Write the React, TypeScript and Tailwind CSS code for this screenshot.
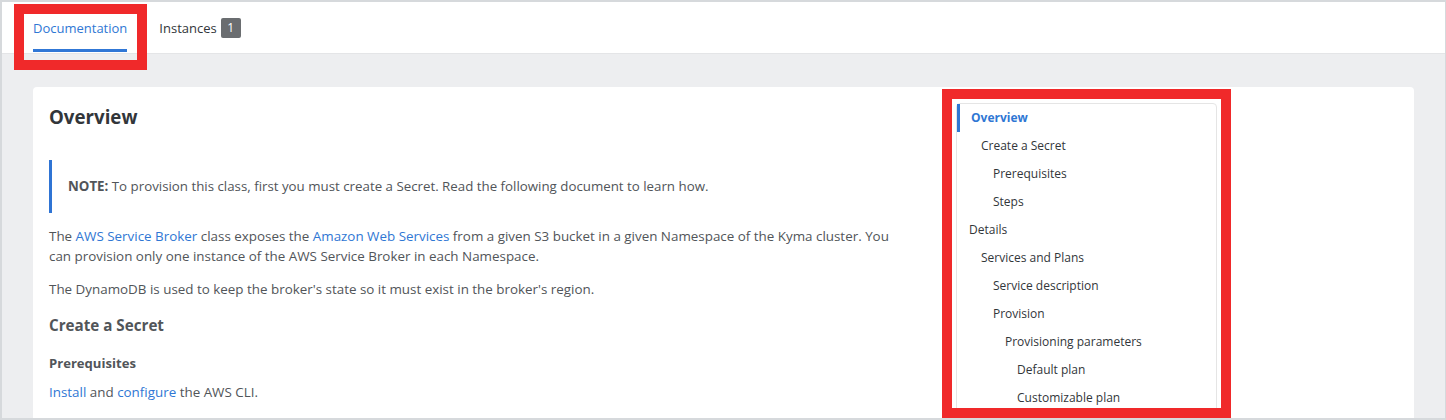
const TOC = [
  { label: 'Overview', pl: 'pl-[11px]', active: true },
  { label: 'Create a Secret', pl: 'pl-[24px]' },
  { label: 'Prerequisites', pl: 'pl-[36px]' },
  { label: 'Steps', pl: 'pl-[36px]' },
  { label: 'Details', pl: 'pl-[12px]' },
  { label: 'Services and Plans', pl: 'pl-[24px]' },
  { label: 'Service description', pl: 'pl-[36px]' },
  { label: 'Provision', pl: 'pl-[36px]' },
  { label: 'Provisioning parameters', pl: 'pl-[48px]' },
  { label: 'Default plan', pl: 'pl-[60px]' },
  { label: 'Customizable plan', pl: 'pl-[60px]' },
]

const link = 'text-[#2f77d4]'

export default function App() {
  return (
    <div
      className="relative w-[1446px] h-[420px] overflow-hidden bg-[#edeef0] border-2 border-r border-[#d6d9dc] text-[#32363a]"
      style={{ fontFamily: '"Open Sans", "Noto Sans", sans-serif' }}
    >
      {/* tabs */}
      <div className="h-[52px] bg-white border-b border-[#e4e5e7] flex items-stretch pl-[31px] gap-8">
        <div className="flex flex-col justify-center relative">
          <span className="text-[13px] text-[#2f77d4] leading-5 pt-px">Documentation</span>
          <div className="absolute left-0 right-0 bottom-px h-[3px] bg-[#3077d6]" />
        </div>
        <div className="flex items-center gap-1 pt-px">
          <span className="text-[13px] leading-5">Instances</span>
          <span className="w-5 h-5 flex items-center justify-center rounded-[2px] bg-[#6a6d70] text-white text-[12px]">
            1
          </span>
        </div>
      </div>

      {/* content */}
      <div className="px-[31px] pt-[33px]">
        <div className="bg-white rounded-[4px] flex p-4 h-[400px]">
          <div className="w-[855px] text-[13.4px] leading-5 text-[#515559]">
            <h1 className="text-[18.7px] leading-7 font-bold text-[#32363a]">Overview</h1>
            <blockquote className="mt-[29px] border-l-[3px] border-[#2f74d4] pl-4 pt-4 pb-[17px] text-[13.3px]">
              <b className="font-bold">NOTE:</b> To provision this class, first you must create a Secret. Read the
              following document to learn how.
            </blockquote>
            <p className="mt-[13px]">
              The <span className={link}>AWS Service Broker</span> class exposes the{' '}
              <span className={link}>Amazon Web Services</span> from a given S3 bucket in a given Namespace of the Kyma
              cluster. You can provision only one instance of the AWS Service Broker in each Namespace.
            </p>
            <p className="mt-[13px]">
              The DynamoDB is used to keep the broker's state so it must exist in the broker's region.
            </p>
            <h2 className="mt-[14px] text-[15.2px] leading-6 font-bold">Create a Secret</h2>
            <h3 className="mt-4 text-[13.1px] font-bold">Prerequisites</h3>
            <p className="mt-[9px]">
              <span className={link}>Install</span> and <span className={link}>configure</span> the AWS CLI.
            </p>
          </div>

          <div className="ml-[52px] w-[261px] self-start border border-[#e5e5e5] rounded-[4px] text-[12px]">
            {TOC.map((t) => (
              <div
                key={t.label}
                className={`h-7 flex items-center ${t.pl} ${
                  t.active ? 'border-l-[3px] border-[#2f77d4] text-[#2f77d4] font-bold' : ''
                }`}
              >
                {t.label}
              </div>
            ))}
          </div>
        </div>
      </div>

      {/* annotation frames */}
      <div className="absolute left-[12px] top-[2px] w-[133px] h-[66px] border-[10px] border-[#f0292a]" />
      <div className="absolute left-[940px] top-[87px] w-[289px] h-[329px] border-[10px] border-[#f0292a]" />
    </div>
  )
}
